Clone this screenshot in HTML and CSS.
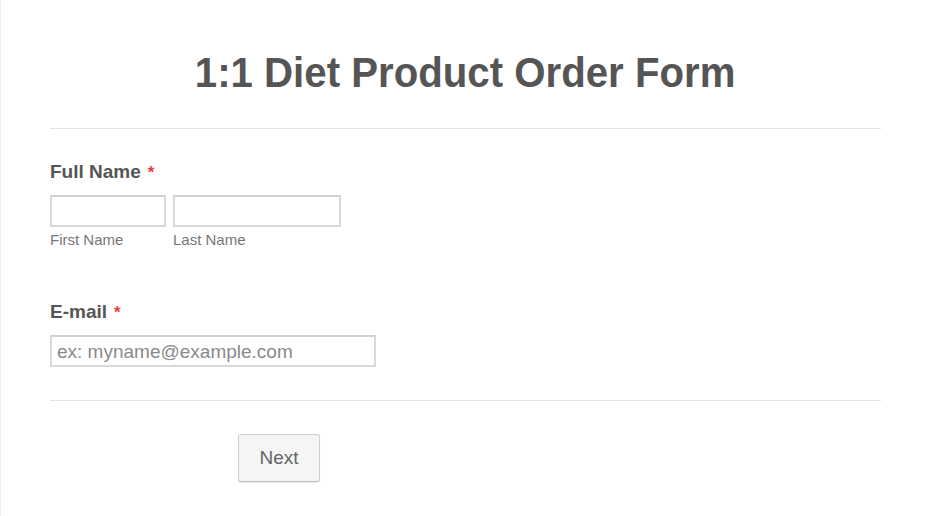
FILE: index.html
```html
<!DOCTYPE html>
<html>
<head>
<meta charset="utf-8">
<link rel="stylesheet" href="styles.css">
</head>
<body>
<div class="page">
  <div class="form">
    <div class="header">
      <h1 class="title"><span class="title-text">1:1 Diet Product Order Form</span></h1>
    </div>
    <div class="field field-name">
      <label class="label">Full Name<span class="req">*</span></label>
      <div class="name-row">
        <div class="name-part">
          <input class="input input-first" type="text">
          <span class="sublabel">First Name</span>
        </div>
        <div class="name-part">
          <input class="input input-last" type="text">
          <span class="sublabel">Last Name</span>
        </div>
      </div>
    </div>
    <div class="field field-email">
      <label class="label">E-mail<span class="req">*</span></label>
      <input class="input input-email" type="text" placeholder="ex: myname@example.com">
    </div>
    <div class="footer">
      <button class="btn-next" type="button">Next</button>
    </div>
  </div>
</div>
</body>
</html>
```
FILE: styles.css
```css
html, body {
  margin: 0;
  padding: 0;
  background: #fff;
}
body {
  font-family: "Liberation Sans", Arial, sans-serif;
  color: #555;
}
.page {
  border-left: 1px solid #ececec;
  min-height: 516px;
  box-sizing: border-box;
}
.form {
  padding: 0 49px 0 49px;
}
.header {
  padding-top: 48px;
  padding-bottom: 32px;
  border-bottom: 1px solid #e3e3e3;
}
.title {
  margin: 0;
  font-size: 43px;
  line-height: 48px;
  font-weight: bold;
  text-align: center;
  color: #555;
}
.title-text {
  display: inline-block;
  transform: scaleX(0.935);
  transform-origin: center;
  white-space: nowrap;
}
.field {
  display: flex;
  flex-direction: column;
}
.field-name {
  padding-top: 32px;
}
.field-email {
  padding-top: 53px;
  padding-bottom: 33px;
  border-bottom: 1px solid #e3e3e3;
}
.label {
  font-size: 19px;
  line-height: 22px;
  font-weight: bold;
  color: #555;
  margin-bottom: 11px;
}
.req {
  color: #f23a3c;
  margin-left: 7px;
  font-size: 17px;
}
.name-row {
  display: flex;
  gap: 7px;
}
.name-part {
  display: flex;
  flex-direction: column;
}
.input {
  box-sizing: border-box;
  height: 32px;
  border: 2px solid #d9d9d9;
  border-top-color: #d0d0d0;
  background: #fff;
  margin: 0;
  padding: 2px 5px 0;
  font-family: "Liberation Sans", Arial, sans-serif;
  font-size: 19px;
  color: #555;
  outline: none;
}
.input::placeholder {
  color: #8a8a8a;
}
.input-first {
  width: 116px;
}
.input-last {
  width: 168px;
}
.input-email {
  width: 326px;
}
.sublabel {
  font-size: 15px;
  line-height: 17px;
  color: #777;
  margin-top: 4px;
}
.footer {
  padding-top: 33px;
  padding-left: 188px;
}
.btn-next {
  box-sizing: border-box;
  width: 82px;
  height: 48px;
  background: #f5f5f5;
  border: 1px solid #cfcfcf;
  border-bottom-color: #bdbdbd;
  border-radius: 3px;
  font-family: "Liberation Sans", Arial, sans-serif;
  font-size: 19px;
  color: #666;
  padding: 0;
  box-shadow: 0 1px 1px rgba(0,0,0,0.08);
}
```
